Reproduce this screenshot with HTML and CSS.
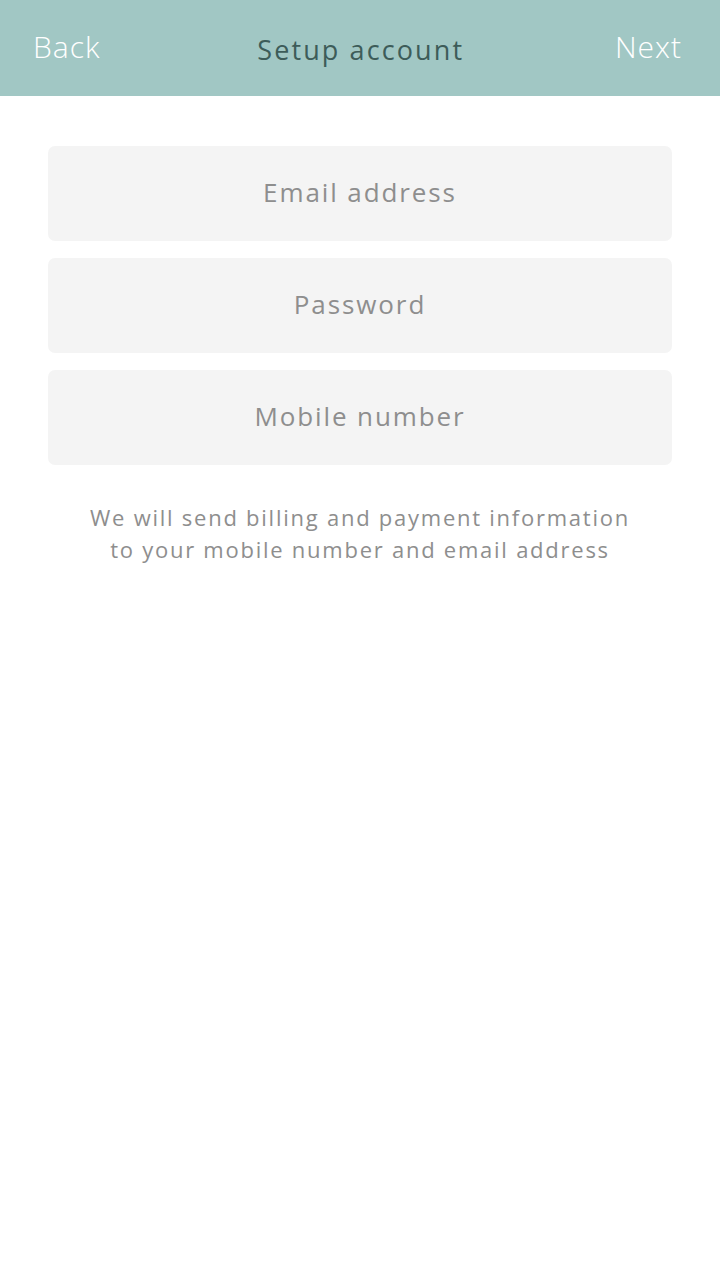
FILE: index.html
```html
<!DOCTYPE html>
<html>
<head>
<meta charset="utf-8">
<link rel="stylesheet" href="styles.css">
</head>
<body>
<header class="topbar">
  <span class="nav-btn">Back</span>
  <h1 class="title">Setup account</h1>
  <span class="nav-btn">Next</span>
</header>
<main class="form">
  <div class="field">Email address</div>
  <div class="field">Password</div>
  <div class="field">Mobile number</div>
  <p class="note">We will send billing and payment information<br>to your mobile number and email address</p>
</main>
</body>
</html>
```
FILE: styles.css
```css
html, body {
  margin: 0;
  padding: 0;
  background: #ffffff;
  font-family: "Open Sans", "Lato", sans-serif;
}
.topbar {
  height: 96px;
  background: #a1c7c4;
  display: flex;
  align-items: center;
  justify-content: space-between;
  padding: 0 38px 0 33px;
  box-sizing: border-box;
}
.nav-btn {
  color: #ffffff;
  font-size: 30px;
  font-weight: 300;
  letter-spacing: 1px;
  margin-top: -4px;
}
.title {
  margin: 2px 0 0 6px;
  font-size: 27px;
  font-weight: 400;
  color: #3d5c59;
  letter-spacing: 2.1px;
}
.form {
  padding: 50px 48px 0;
  display: flex;
  flex-direction: column;
  gap: 17px;
}
.field {
  height: 95px;
  background: #f4f4f4;
  border-radius: 7px;
  display: flex;
  align-items: center;
  justify-content: center;
  color: #8e8e8e;
  font-size: 26px;
  font-weight: 400;
  letter-spacing: 1.9px;
  padding-bottom: 4px;
  box-sizing: border-box;
}
.note {
  margin: 19px 0 0;
  text-align: center;
  color: #8e8e8e;
  font-size: 22px;
  line-height: 32px;
  letter-spacing: 1.75px;
}
```
